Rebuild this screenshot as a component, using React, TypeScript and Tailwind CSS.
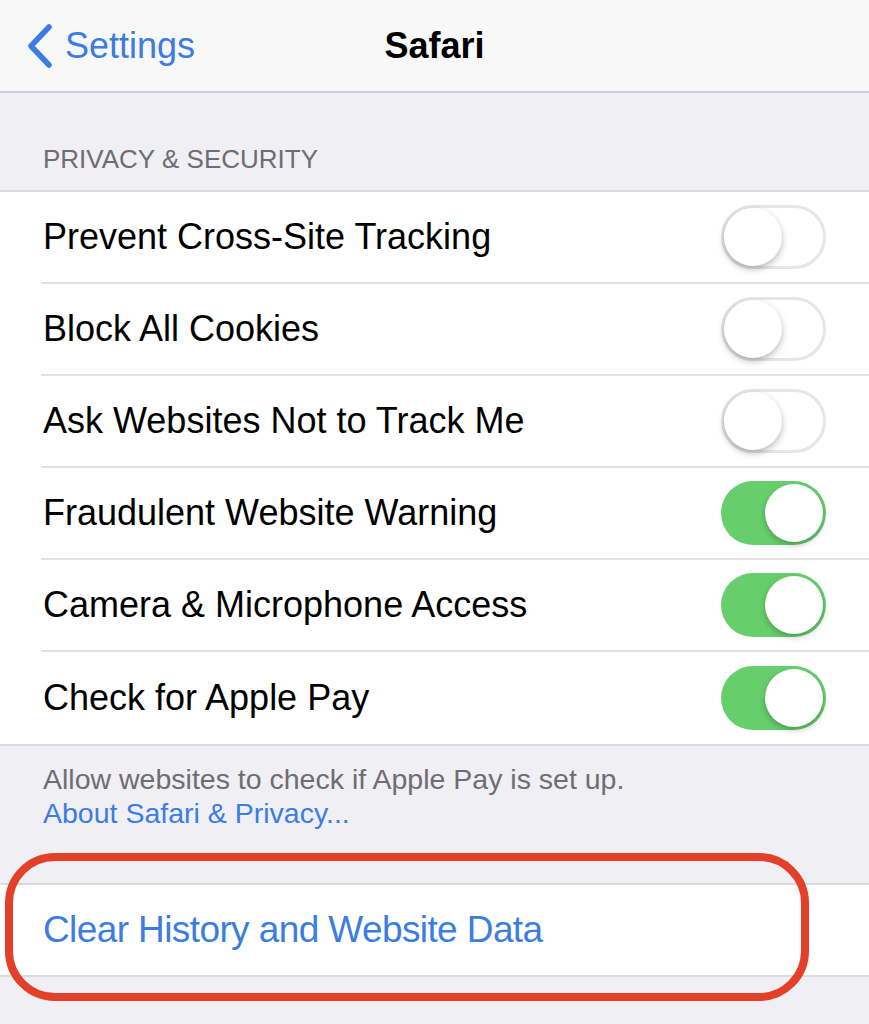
import React from 'react';

const rows = [
  { label: 'Prevent Cross-Site Tracking', on: false },
  { label: 'Block All Cookies', on: false },
  { label: 'Ask Websites Not to Track Me', on: false },
  { label: 'Fraudulent Website Warning', on: true },
  { label: 'Camera & Microphone Access', on: true },
  { label: 'Check for Apple Pay', on: true },
];

function Toggle({ on }: { on: boolean }) {
  if (on) {
    return (
      <div className="flex h-[64px] w-[105px] shrink-0 items-center justify-end rounded-full bg-[#66cf6c] pr-[3px]">
        <div className="h-[58px] w-[58px] rounded-full bg-white shadow-[0_3px_6px_rgba(0,0,0,0.25)]" />
      </div>
    );
  }
  return (
    <div className="flex h-[64px] w-[105px] shrink-0 items-center rounded-full border-[3px] border-[#e6e6e9] bg-white">
      <div className="h-[58px] w-[58px] rounded-full bg-white shadow-[0_3px_7px_rgba(0,0,0,0.28)]" />
    </div>
  );
}

export default function App() {
  return (
    <div
      className="relative flex h-[1024px] w-full flex-col overflow-hidden bg-[#efeff4]"
      style={{ fontFamily: '"Liberation Sans", Arial, sans-serif' }}
    >
      {/* nav bar */}
      <div className="grid h-[93px] grid-cols-[1fr_auto_1fr] items-center border-b-2 border-[#cfcfd3] bg-[#f8f8f8]">
        <div className="flex items-center gap-[12px] pl-[27px]">
          <svg width="26" height="44" viewBox="0 0 26 44" fill="none">
            <path d="M22 3 L4 22 L22 41" stroke="#3b7de3" strokeWidth="5.5" strokeLinecap="round" strokeLinejoin="round" />
          </svg>
          <span className="text-[36px] text-[#3b7de3]">Settings</span>
        </div>
        <div className="text-[36px] font-bold text-black">Safari</div>
        <div />
      </div>

      {/* section header */}
      <div className="flex h-[97px] items-end pb-[11px] pl-[43px] text-[26px] text-[#6d6d72]">
        PRIVACY &amp; SECURITY
      </div>

      {/* toggles */}
      <div className="border-y-2 border-[#dcdce0] bg-white">
        {rows.map((r, i) => (
          <div key={r.label} className="flex h-[92px] pl-[41px]">
            <div
              className={`flex flex-1 items-center justify-between pl-[2px] pr-[43px] ${
                i < rows.length - 1 ? 'border-b-2 border-[#e2e2e5]' : ''
              }`}
            >
              <span className="text-[36px] text-black">{r.label}</span>
              <Toggle on={r.on} />
            </div>
          </div>
        ))}
      </div>

      {/* footer */}
      <div className="flex h-[137px] flex-col pl-[43px] pt-[16px] text-[28.5px] leading-[34px]">
        <span className="text-[#6d6d72]">Allow websites to check if Apple Pay is set up.</span>
        <span className="text-[#3b7de3]">About Safari &amp; Privacy...</span>
      </div>

      {/* clear history */}
      <div className="flex h-[94px] items-center border-y-2 border-[#dcdce0] bg-white pl-[43px]">
        <span className="text-[37px] tracking-[-0.6px] text-[#3b7de3]">Clear History and Website Data</span>
      </div>

      {/* annotation */}
      <div className="pointer-events-none absolute left-[5px] top-[853px] h-[148px] w-[804px] rounded-[50px] border-[8px] border-[#e43f29]" />
    </div>
  );
}
